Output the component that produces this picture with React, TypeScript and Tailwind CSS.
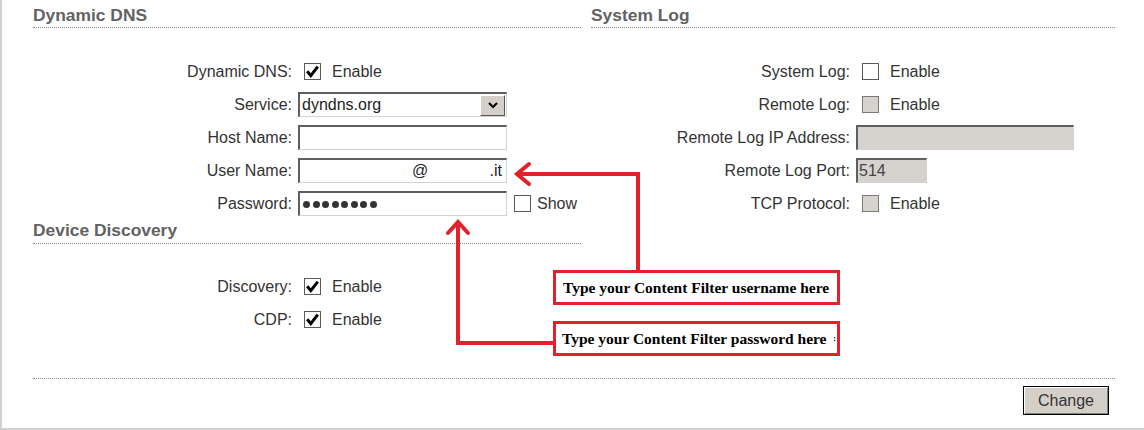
import type { ReactNode } from "react"

const font = { fontFamily: '"Liberation Sans", Arial, sans-serif' }

function CheckBox({ checked = false, disabled = false }: { checked?: boolean; disabled?: boolean }) {
  return (
    <span
      className={`flex h-[17px] w-[17px] items-center justify-center border border-[#5a5a5a] ${
        disabled ? "bg-[#d6d3ce] border-[#7a7a7a]" : "bg-white"
      }`}
    >
      {checked && (
        <svg width="15" height="15" viewBox="0 0 15 15">
          <path d="M2.2 7.2 L5.8 11.6 L12.8 2.6" fill="none" stroke="#000" strokeWidth="3" />
        </svg>
      )}
    </span>
  )
}

function Field({ width, disabled = false, children }: { width: string; disabled?: boolean; children?: ReactNode }) {
  return (
    <div
      className={`flex h-[25px] items-center border-t-2 border-l-2 border-r border-b border-t-[#5e5e5e] border-l-[#5e5e5e] border-r-[#d2d2d2] border-b-[#d2d2d2] text-[16px] text-[#222] ${width} ${
        disabled ? "bg-[#d6d3ce]" : "bg-white"
      }`}
    >
      {children}
    </div>
  )
}

function Row({ label, children }: { label: string; children: ReactNode }) {
  return (
    <div className="flex h-[33px] items-center">
      <div className="w-[259px] shrink-0 text-right text-[16px] text-[#333]">{label}</div>
      <div className="flex items-center pl-[6px]">{children}</div>
    </div>
  )
}

function Enable({ checked, disabled }: { checked?: boolean; disabled?: boolean }) {
  return (
    <div className="ml-[6px] flex items-center">
      <CheckBox checked={checked} disabled={disabled} />
      <span className="ml-[11px] text-[16px] text-[#333]">Enable</span>
    </div>
  )
}

function Header({ title, className }: { title: string; className: string }) {
  return (
    <div className={`border-b border-dotted border-[#8a8a8a] text-[17.4px] leading-[20px] font-bold text-[#626262] ${className}`}>
      {title}
    </div>
  )
}

export default function App() {
  return (
    <div className="relative h-[430px] w-[1144px] overflow-hidden bg-white" style={font}>
      <div className="h-[430px] border-b-2 border-l-2 border-[#d0d0d0] pl-[31px]">
        <div className="grid grid-cols-[548px_524px] gap-[10px]">
          <div>
            <Header title="Dynamic DNS" className="h-[28px] pt-[5px]" />
            <div className="mt-[27px]">
              <Row label="Dynamic DNS:">
                <Enable checked />
              </Row>
              <Row label="Service:">
                <Field width="w-[209px]">
                  <span className="flex-1 pl-[2px]">dyndns.org</span>
                  <span className="mr-[1px] flex h-[21px] w-[25px] items-center justify-center border-t border-l border-r border-b border-t-white border-l-white border-r-[#555] border-b-[#555] bg-[#d4d0c8]">
                    <svg width="12" height="10" viewBox="0 0 12 10">
                      <path d="M2 3 L6 7 L10 3" fill="none" stroke="#000" strokeWidth="2" />
                    </svg>
                  </span>
                </Field>
              </Row>
              <Row label="Host Name:">
                <Field width="w-[209px]" />
              </Row>
              <Row label="User Name:">
                <Field width="w-[209px]">
                  <span className="pl-[112px]">@</span>
                  <span className="flex-1" />
                  <span className="pr-[4px]">.it</span>
                </Field>
              </Row>
              <Row label="Password:">
                <Field width="w-[209px]">
                  <div className="flex gap-[2.5px] pl-[3px]">
                    {[0, 1, 2, 3, 4, 5, 6, 7].map((i) => (
                      <span key={i} className="h-[7px] w-[7px] rounded-full bg-[#333]" />
                    ))}
                  </div>
                </Field>
                <div className="ml-[7px] flex items-center">
                  <CheckBox />
                  <span className="ml-[6px] text-[16px] text-[#333]">Show</span>
                </div>
              </Row>
            </div>
            <Header title="Device Discovery" className="h-[24px]" />
            <div className="mt-[26px]">
              <Row label="Discovery:">
                <Enable checked />
              </Row>
              <Row label="CDP:">
                <Enable checked />
              </Row>
            </div>
          </div>

          <div>
            <Header title="System Log" className="h-[28px] pt-[5px]" />
            <div className="mt-[27px]">
              <Row label="System Log:">
                <Enable />
              </Row>
              <Row label="Remote Log:">
                <Enable disabled />
              </Row>
              <Row label="Remote Log IP Address:">
                <Field width="w-[218px]" disabled />
              </Row>
              <Row label="Remote Log Port:">
                <Field width="w-[71px]" disabled>
                  <span className="pl-[1px] text-[#444]">514</span>
                </Field>
              </Row>
              <Row label="TCP Protocol:">
                <Enable disabled />
              </Row>
            </div>
          </div>
        </div>

        <div className="mt-[42px] mr-[29px] flex justify-end border-t border-dotted border-[#8a8a8a] pt-[7px] pr-[6px]">
          <button
            type="button"
            className="h-[29px] w-[86px] border border-black bg-[#d4d0c8] text-[16px] text-[#333] shadow-[inset_1px_1px_0_#fff,inset_-1px_-1px_0_#808080]"
          >
            Change
          </button>
        </div>
      </div>

      {/* annotation overlay */}
      <svg className="pointer-events-none absolute top-0 left-0" width="1144" height="430">
        <g fill="none" stroke="#e3212b" strokeWidth="4">
          <polyline points="638,271 638,174 518,174" />
          <polyline points="529,164 517,174 529,184" strokeLinecap="round" />
          <polyline points="554,343 458,343 458,224" />
          <polyline points="448,233 458,222 468,233" strokeLinecap="round" />
        </g>
      </svg>
      <div
        className="absolute top-[270px] left-[553px] flex h-[35px] w-[287px] items-center border-[3px] border-[#e3212b] bg-white pl-[7px] text-[15.5px] font-bold text-black"
        style={{ fontFamily: '"Liberation Serif", "Times New Roman", serif' }}
      >
        Type your Content Filter username here
      </div>
      <div
        className="absolute top-[321px] left-[553px] flex h-[35px] w-[287px] items-center border-[3px] border-[#e3212b] bg-white pl-[6px] text-[15.5px] font-bold text-black"
        style={{ fontFamily: '"Liberation Serif", "Times New Roman", serif' }}
      >
        Type your Content Filter password here
        <span className="ml-auto pr-[1px] text-[8px]">:</span>
      </div>
    </div>
  )
}
